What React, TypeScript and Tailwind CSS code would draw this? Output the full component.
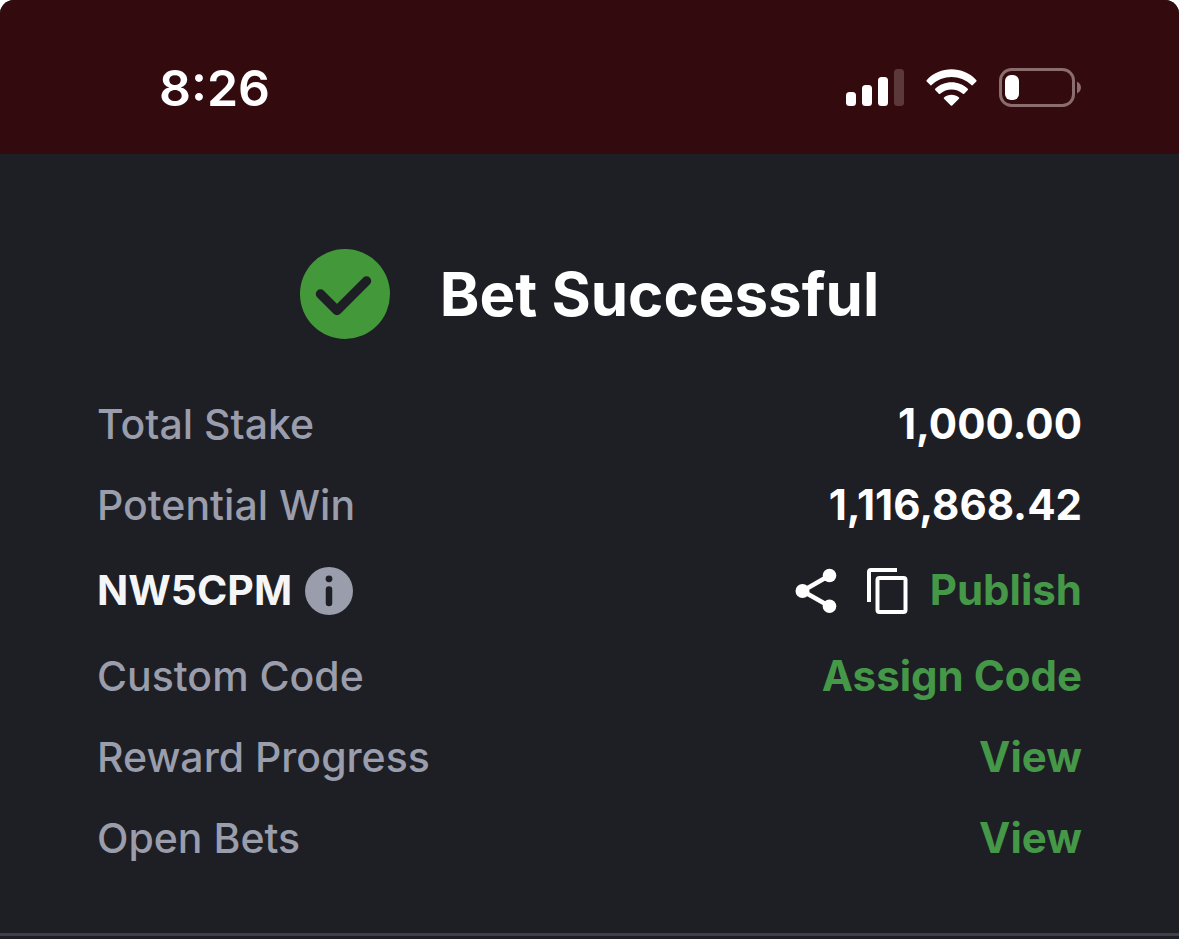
import type { ReactNode } from "react";

function StatusBar() {
  return (
    <header className="flex h-[154px] items-center justify-between rounded-t-[14px] bg-[#330a0d] pt-[22px] pr-[97px] pl-[159px]">
      <time className="text-[50px] leading-[60px] font-semibold text-white">8:26</time>
      <div className="flex items-center gap-[22px]">
        <svg className="h-[38px] w-[58px]" viewBox="0 0 58 38" fill="#fff" role="img" aria-label="Signal strength">
          <rect x="0" y="23" width="10" height="14" rx="3.500" />
          <rect x="16" y="16" width="10" height="21" rx="3.500" />
          <rect x="32" y="8" width="10" height="29" rx="3.500" />
          <rect x="48" y="0" width="10" height="37" rx="3.500" fill="#5b393b" />
        </svg>
        <svg className="h-[38px] w-[51px]" viewBox="0 0 51 38" fill="#fff" role="img" aria-label="Wi-Fi">
          <path d="M0.600 11.200C14 -3.300 37 -3.300 50.400 11.200Q50.800 11.800 50.300 12.400L46.500 16.200Q46 16.600 45.400 16.100C34.500 5.300 16.500 5.300 5.600 16.100Q5 16.600 4.500 16.200L0.700 12.400Q0.200 11.800 0.600 11.200Z" />
          <path d="M9.200 19.800C18 11 33 11 41.800 19.800Q42.300 20.400 41.800 21L38 24.900Q37.400 25.300 36.800 24.800C30.500 18.900 20.500 18.900 14.200 24.800Q13.600 25.300 13 24.900L9.200 21Q8.700 20.400 9.200 19.800Z" />
          <path d="M18 28.500C22.200 24.900 28.800 24.900 33 28.500Q33.600 29.100 33 29.700L26.200 36.500Q25.500 37.100 24.800 36.500L18 29.700Q17.400 29.100 18 28.500Z" />
        </svg>
        <svg className="h-[40px] w-[83px]" viewBox="0 0 83 40" role="img" aria-label="Battery low">
          <rect x="1.500" y="1.500" width="73" height="36" rx="11" fill="none" stroke="#8b6c6f" strokeWidth="3" />
          <rect x="6" y="7" width="14" height="25" rx="6" fill="#fff" />
          <path d="M78 13.500C83.300 16 83.300 23 78 25.500Z" fill="#8b6c6f" />
        </svg>
      </div>
    </header>
  );
}

function Row({ label, children }: { label: string; children: ReactNode }) {
  return (
    <div className="flex h-[81px] items-center justify-between">
      <dt className="text-[41px] text-[#9a9dab]">{label}</dt>
      <dd className="font-bold text-white">{children}</dd>
    </div>
  );
}

function ShareIcon() {
  return (
    <svg className="h-[46px] w-[42px]" viewBox="0 0 42 46" aria-hidden="true">
      <path d="M34.500 8.500L7.500 24L34.500 39.200" fill="none" stroke="#fff" strokeWidth="4.500" />
      <circle cx="34.500" cy="8.500" r="6.800" fill="#fff" />
      <circle cx="7.500" cy="24" r="7" fill="#fff" />
      <circle cx="34.500" cy="39.200" r="6.800" fill="#fff" />
    </svg>
  );
}

function CopyIcon() {
  return (
    <svg className="h-[48px] w-[41px]" viewBox="0 0 41 48" fill="none" stroke="#fff" strokeWidth="4" aria-hidden="true">
      <path d="M2 36V6Q2 4 4 4H30" />
      <rect x="10.500" y="12" width="28" height="34" rx="2" />
    </svg>
  );
}

export default function App() {
  return (
    <div className="bg-white font-['Inter',sans-serif]">
      <div className="min-h-screen rounded-t-[14px] bg-[#1e1f25]">
        <StatusBar />
        <main>
          <div className="flex items-center justify-center gap-[50px] pt-[95px]">
            <svg className="size-[90px]" viewBox="0 0 90 90" aria-hidden="true">
              <circle cx="45" cy="45" r="45" fill="#43993a" />
              <path d="M20.500 45L37 61.500L66.500 32" fill="none" stroke="#1e1f25" strokeWidth="9.500" strokeLinecap="round" strokeLinejoin="round" />
            </svg>
            <h1 className="text-[60px] leading-[72px] font-bold text-white">Bet Successful</h1>
          </div>
          <dl className="px-[97px] pt-[44px] text-[42px] leading-[52px] font-medium">
            <Row label="Total Stake">1,000.00</Row>
            <Row label="Potential Win">1,116,868.42</Row>
            <div className="flex h-[90px] items-center justify-between">
              <dt className="flex items-center gap-[13px] text-[41px] font-bold text-[#f4f5f7]">
                NW5CPM
                <button type="button" aria-label="About booking code">
                  <svg className="block h-[50px] w-12" viewBox="0 0 48 50" aria-hidden="true">
                    <circle cx="24" cy="26" r="24" fill="#9a9dab" />
                    <circle cx="24" cy="13.800" r="3.400" fill="#1e1f25" />
                    <path d="M24 24.500V38" stroke="#1e1f25" strokeWidth="6.500" strokeLinecap="round" />
                  </svg>
                </button>
              </dt>
              <dd className="flex items-center font-bold text-[#459848]">
                <button type="button" aria-label="Share" className="mr-[30px]">
                  <ShareIcon />
                </button>
                <button type="button" aria-label="Copy code" className="mr-[22px]">
                  <CopyIcon />
                </button>
                <button type="button">Publish</button>
              </dd>
            </div>
            <Row label="Custom Code">
              <button type="button" className="text-[#459848]">Assign Code</button>
            </Row>
            <Row label="Reward Progress">
              <a href="#rewards" className="text-[#459848]">View</a>
            </Row>
            <Row label="Open Bets">
              <a href="#bets" className="text-[#459848]">View</a>
            </Row>
          </dl>
          <hr className="mt-[55px] h-[3px] border-0 bg-[#403f4e]" />
        </main>
      </div>
    </div>
  );
}
